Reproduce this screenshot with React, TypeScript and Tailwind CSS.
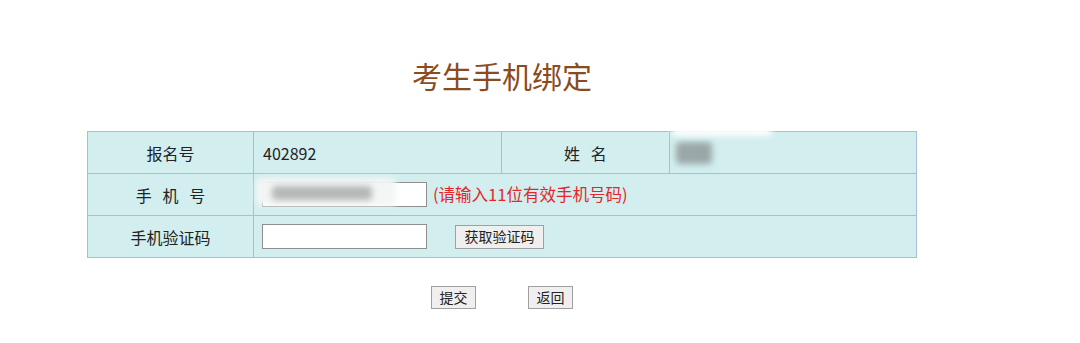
const cjk = '"Microsoft YaHei", "Noto Sans CJK SC", "Liberation Sans", sans-serif';

function Blur({ className }: { className: string }) {
  return <div className={`absolute rounded-sm blur-[3px] ${className}`} />;
}

export default function App() {
  const td = 'border border-[#aab9e6] h-[42px] align-middle';
  return (
    <div className="h-[343px] w-[1080px] bg-white" style={{ fontFamily: cjk }}>
      <div className="w-[830px] ml-[87px]">
        <h1 className="pt-[55px] h-[131px] text-center text-[30px] leading-[40px] text-[#8b4b1f]">考生手机绑定</h1>
        <table className="w-full border-collapse bg-[#d2eeee] text-[16px] text-[#222]">
          <tbody>
            <tr>
              <td className={`${td} w-[166px] text-center`}>报名号</td>
              <td className={`${td} w-[248px] pl-[9px]`}>402892</td>
              <td className={`${td} w-[168px] text-center`}>姓&nbsp;&nbsp;&nbsp;名</td>
              <td className={`${td} relative`}>
                <Blur className="left-[6px] top-[10px] h-[22px] w-[36px] bg-[#9aa7a8]" />
                <Blur className="left-[2px] top-[-6px] h-[10px] w-[100px] bg-white" />
              </td>
            </tr>
            <tr>
              <td className={`${td} text-center`}>手&nbsp;&nbsp;&nbsp;机&nbsp;&nbsp;&nbsp;号</td>
              <td className={`${td} pl-[8px] relative`} colSpan={3}>
                <div className="flex items-center">
                  <input className="h-[25px] w-[165px] border border-[#8f8f8f] bg-white" />
                  <span className="ml-[6px] text-[16.5px] text-[#e3262b]">(请输入11位有效手机号码)</span>
                </div>
                <Blur className="left-[2px] top-[4px] h-[28px] w-[140px] bg-[#f4f6f6]" />
                <Blur className="left-[18px] top-[12px] h-[14px] w-[100px] bg-[#b4b6b7]" />
              </td>
            </tr>
            <tr>
              <td className={`${td} text-center`}>手机验证码</td>
              <td className={`${td} pl-[8px]`} colSpan={3}>
                <div className="flex items-center">
                  <input className="h-[25px] w-[165px] border border-[#8f8f8f] bg-white" />
                  <button className="ml-[28px] h-[24px] w-[89px] border border-[#a0a0a0] bg-[#efefef] text-[14px] text-[#222]">获取验证码</button>
                </div>
              </td>
            </tr>
          </tbody>
        </table>
        <div className="mt-[28px] flex justify-center gap-[52px]">
          <button className="h-[23px] w-[45px] border border-[#a0a0a0] bg-[#efefef] text-[14px] text-[#222]">提交</button>
          <button className="h-[23px] w-[45px] border border-[#a0a0a0] bg-[#efefef] text-[14px] text-[#222]">返回</button>
        </div>
      </div>
    </div>
  );
}
